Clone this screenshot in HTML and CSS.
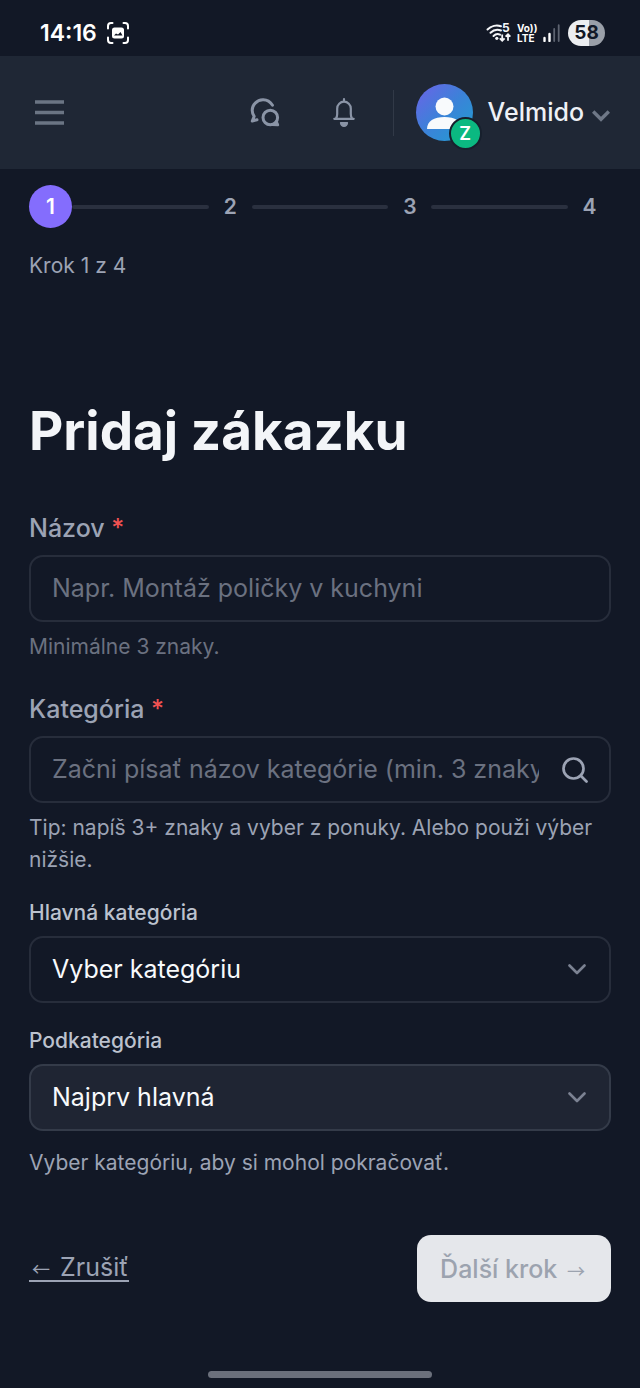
FILE: index.html
```html
<!DOCTYPE html>
<html lang="sk">
<head>
<meta charset="utf-8">
<meta name="viewport" content="width=device-width, initial-scale=1">
<title>Pridaj zákazku</title>
<link rel="stylesheet" href="styles.css">
</head>
<body>
<div class="screen">
  <div class="status">
    <div class="status-group">
      <span class="clock">14:16</span>
      <svg class="capture" viewBox="0 0 22 22" aria-hidden="true">
        <path d="M1 6.500V4a3 3 0 0 1 3-3h1.500M16.500 1H18a3 3 0 0 1 3 3v2.500M21 15.500V18a3 3 0 0 1-3 3h-1.500M5.500 21H4a3 3 0 0 1-3-3v-2.500" fill="none" stroke="#fff" stroke-width="2" stroke-linecap="round"/>
        <rect x="5" y="5.500" width="12" height="11" rx="2.500" fill="#fff"/>
        <path d="M7 13.500l2-2 2 1 2.500-2.500 2 3.500z" fill="#121826"/>
      </svg>
    </div>
    <div class="status-group">
      <svg class="wifi" viewBox="0 -4 25 28" aria-hidden="true">
        <g fill="none" stroke="#f4f5f8" stroke-width="2" stroke-linecap="round">
          <path d="M1.500 6.500C5 2.800 10.500 1.700 15 3.200"/>
          <path d="M4.500 9.800C7.500 6.800 11.500 6.100 15 7.500"/>
          <path d="M7.500 13c2-2 4.500-2.300 6.500-1.300"/>
        </g>
        <circle cx="10.800" cy="15.300" r="1.600" fill="#f4f5f8"/>
        <path d="M16.200 11.500v6M13.800 15.400l2.400 2.400 2.400-2.400M22 17.800v-6M19.600 13.700L22 11.300l2.400 2.400" fill="none" stroke="#f4f5f8" stroke-width="1.800"/>
        <text x="16" y="9" class="wifi-gen">5</text>
      </svg>
      <span class="volte"><span>Vo))</span><span>LTE</span></span>
      <svg class="signal" viewBox="0 0 17 18" aria-hidden="true">
        <path d="M1.500 14v3M6.500 10v7" stroke="#fff" stroke-width="2.400" stroke-linecap="round"/>
        <path d="M11.200 5v12M15.700 1.200V17" stroke="#5d6370" stroke-width="1.800" stroke-linecap="round"/>
      </svg>
      <span class="battery">58</span>
    </div>
  </div>

  <header class="topbar">
    <button class="icon-button" type="button" aria-label="Menu">
      <svg class="menu-icon" viewBox="0 0 29 26"><path d="M0 2h29M0 12.500h29M0 23h29" stroke="#6b7584" stroke-width="3.600"/></svg>
    </button>
    <div class="actions">
      <button class="icon-button" type="button" aria-label="Správy">
        <svg class="chat-icon" viewBox="0 0 30 30" fill="none" stroke="#8a94a6" stroke-width="3" stroke-linejoin="round" stroke-linecap="round">
          <path d="M22.500 7.200C20 3.400 16.500 1.600 12.800 1.800 6.800 2.200 2.200 6.700 2.200 12.300c0 2.400.8 4.300 2 6L2.300 23l4.700-1.200"/>
          <circle cx="20.300" cy="19.500" r="7.300"/>
          <path d="M26.200 23.500l1.500 3.300-5.500-.2"/>
        </svg>
      </button>
      <button class="icon-button" type="button" aria-label="Upozornenia">
        <svg class="bell-icon" viewBox="0 0 22 29" fill="none" stroke="#8a94a6" stroke-width="2.200" stroke-linecap="round" stroke-linejoin="round">
          <path d="M11 1.200v2M1.300 20.800h19.400M2.900 20.500c1-1.200 1.300-2.500 1.300-4.500v-5.500a6.800 6.800 0 0 1 13.600 0V16c0 2 .3 3.300 1.300 4.500"/>
          <path d="M7.600 24.800h6.800a3.400 3.400 0 0 1-6.800 0z" fill="#8a94a6" stroke-width="1.500"/>
        </svg>
      </button>
      <button class="profile" type="button">
        <span class="avatar">
          <svg class="person" viewBox="0 0 57 57" aria-hidden="true"><circle cx="28.500" cy="22.500" r="9" fill="#f8fafc"/><path d="M11 45c0-8 7-12 17.500-12S46 37 46 45z" fill="#f8fafc"/></svg>
          <span class="badge">Z</span>
        </span>
        <span class="name">Velmido</span>
        <svg class="caret" viewBox="0 0 18 13" aria-hidden="true"><path d="M1.200 2.500L9 10.300 16.800 2.500" fill="none" stroke="#6f7887" stroke-width="3.400"/></svg>
      </button>
    </div>
  </header>

  <main class="content">
    <ol class="steps">
      <li class="step step-current" aria-current="step">1</li>
      <li class="bar" role="presentation"></li>
      <li class="step">2</li>
      <li class="bar" role="presentation"></li>
      <li class="step">3</li>
      <li class="bar" role="presentation"></li>
      <li class="step">4</li>
    </ol>
    <p class="progress">Krok 1 z 4</p>

    <h1 class="title">Pridaj zákazku</h1>

    <form class="form">
      <div class="field">
        <label class="label" for="name">Názov <span class="required">*</span></label>
        <input class="control" id="name" type="text" placeholder="Napr. Montáž poličky v kuchyni">
        <p class="hint hint-dim">Minimálne 3 znaky.</p>
      </div>

      <div class="field">
        <label class="label" for="category">Kategória <span class="required">*</span></label>
        <div class="control-wrap">
          <input class="control control-search" id="category" type="text" placeholder="Začni písať názov kategórie (min. 3 znaky)">
          <svg class="search-icon" viewBox="0 0 26 26" aria-hidden="true"><circle cx="11.500" cy="11.500" r="10" fill="none" stroke="#9ca3b4" stroke-width="2.700"/><path d="M18.800 18.800l5.700 5.700" stroke="#9ca3b4" stroke-width="2.700" stroke-linecap="round"/></svg>
        </div>
        <p class="hint">Tip: napíš 3+ znaky a vyber z ponuky. Alebo použi výber nižšie.</p>
      </div>

      <div class="picker">
        <label class="label-small" for="main-category">Hlavná kategória</label>
        <div class="control-wrap">
          <select class="control" id="main-category"><option>Vyber kategóriu</option></select>
          <svg class="chevron" viewBox="0 0 18 11" aria-hidden="true"><path d="M1.500 1.500L9 9l7.500-7.500" fill="none" stroke="#7b8292" stroke-width="2.600" stroke-linecap="round" stroke-linejoin="round"/></svg>
        </div>
      </div>

      <div class="picker">
        <label class="label-small" for="subcategory">Podkategória</label>
        <div class="control-wrap">
          <select class="control" id="subcategory" disabled><option>Najprv hlavná</option></select>
          <svg class="chevron" viewBox="0 0 18 11" aria-hidden="true"><path d="M1.500 1.500L9 9l7.500-7.500" fill="none" stroke="#7b8292" stroke-width="2.600" stroke-linecap="round" stroke-linejoin="round"/></svg>
        </div>
      </div>
      <p class="notice">Vyber kategóriu, aby si mohol pokračovať.</p>

      <div class="footer">
        <a class="cancel" href="#"><span class="arrow">←</span> Zrušiť</a>
        <button class="next" type="submit" disabled>Ďalší krok <span class="arrow">→</span></button>
      </div>
    </form>
  </main>
  <div class="home-bar"></div>
</div>
</body>
</html>
```

FILE: styles.css
```css
* {
  box-sizing: border-box;
}

body {
  margin: 0;
  background: #121826;
  color: #9ca3b4;
  font-family: Inter, "Noto Sans", sans-serif;
  font-size: 25px;
  line-height: 32px;
}

button,
input,
select {
  font: inherit;
  color: inherit;
}

p,
h1,
ol {
  margin: 0;
  padding: 0;
}

svg {
  display: block;
  flex: none;
}

.screen {
  display: flex;
  flex-direction: column;
  min-height: 100vh;
}

/* Status bar */
.status {
  display: flex;
  align-items: center;
  justify-content: space-between;
  height: 56px;
  padding: 10px 35px 0 40px;
  color: #fff;
}

.status-group {
  display: flex;
  align-items: center;
  gap: 6px;
}

.clock {
  font-size: 23px;
  font-weight: 600;
  margin-right: 4px;
}

.capture {
  width: 22px;
  height: 22px;
}

.wifi {
  width: 25px;
  height: 28px;
}

.wifi-gen {
  fill: #f4f5f8;
  font-size: 12px;
  font-weight: 700;
}

.volte {
  display: flex;
  flex-direction: column;
  width: 20px;
  font-size: 10px;
  font-weight: 700;
  line-height: 10px;
}

.signal {
  width: 17px;
  height: 18px;
}

.battery {
  width: 37px;
  height: 26px;
  margin-left: 2px;
  border-radius: 13px;
  background: linear-gradient(90deg, #eceef1 58%, #9a9fa8 58%);
  color: #121826;
  font-size: 19px;
  font-weight: 700;
  line-height: 26px;
  text-align: center;
}

/* Header */
.topbar {
  display: flex;
  align-items: center;
  justify-content: space-between;
  height: 113px;
  padding: 0 30px 0 35px;
  background: #1f2735;
}

.icon-button,
.profile {
  padding: 0;
  border: 0;
  background: none;
}

.menu-icon {
  width: 29px;
  height: 26px;
}

.actions {
  display: flex;
  align-items: center;
}

.chat-icon {
  width: 30px;
  height: 30px;
  margin-right: 53px;
}

.bell-icon {
  width: 22px;
  height: 29px;
  margin-right: 38px;
}

.profile {
  display: flex;
  align-items: center;
  padding-left: 23px;
  background: linear-gradient(#313947, #313947) left center / 1px 46px no-repeat;
}

.avatar {
  position: relative;
  width: 57px;
  height: 57px;
  border-radius: 50%;
  background: linear-gradient(135deg, #6d62e8, #3b82d8 50%, #1f9fd0);
}

.person {
  width: 57px;
  height: 57px;
}

.badge {
  position: absolute;
  right: -9px;
  bottom: -9px;
  width: 33px;
  height: 33px;
  border: 2px solid #17202d;
  border-radius: 50%;
  background: #0bb981;
  color: #fff;
  font-size: 18px;
  font-weight: 600;
  line-height: 29px;
  text-align: center;
}

.name {
  margin: 0 8px 2px 15px;
  color: #eef1f6;
  font-weight: 500;
}

.caret {
  width: 18px;
  height: 13px;
  margin-top: 6px;
}

/* Wizard progress */
.content {
  flex: 1;
  padding: 16px 29px 0;
}

.steps {
  display: flex;
  align-items: center;
  list-style: none;
}

.step {
  width: 43px;
  height: 43px;
  border-radius: 50%;
  font-size: 21px;
  font-weight: 600;
  line-height: 43px;
  text-align: center;
}

.step-current {
  background: #846dfd;
  color: #fff;
}

.bar {
  flex: 1;
  height: 4px;
  border-radius: 2px;
  background: #2a303f;
}

.progress {
  margin-top: 22px;
  font-size: 21px;
}

.title {
  margin-top: 117px;
  color: #f3f5f8;
  font-size: 53px;
  font-weight: 700;
  line-height: 64px;
}

/* Form */
.form {
  margin-top: 49px;
}

.field {
  margin-bottom: 30px;
}

.field + .picker {
  margin-top: -9px;
}

.picker {
  margin-bottom: 22px;
}

.label {
  display: block;
  margin-bottom: 11px;
  font-weight: 500;
}

.required {
  color: #f05252;
}

.label-small {
  display: block;
  margin-bottom: 7px;
  color: #bcc2ce;
  font-size: 21px;
  font-weight: 500;
}

.control-wrap {
  position: relative;
}

.control {
  display: block;
  width: 100%;
  height: 67px;
  padding: 0 21px 1px;
  border: 2px solid #272d3b;
  border-radius: 14px;
  background: transparent;
  color: #f8fafc;
  appearance: none;
}

.control::placeholder {
  color: #6b7180;
  opacity: 1;
}

.control:disabled {
  border-color: #343b49;
  background: #1f2533;
  color: #f8fafc;
  opacity: 1;
}

.control-search {
  padding-right: 70px;
}

.search-icon {
  position: absolute;
  top: 21px;
  right: 23px;
  width: 26px;
  height: 26px;
}

.chevron {
  position: absolute;
  top: 28px;
  right: 25px;
  width: 18px;
  height: 11px;
  pointer-events: none;
}

.hint {
  margin-top: 9px;
  font-size: 21px;
}

.hint-dim {
  color: #6b7180;
}

.notice {
  margin-top: -6px;
  font-size: 21px;
}

.footer {
  display: flex;
  align-items: center;
  justify-content: space-between;
  margin-top: 56px;
}

.cancel {
  border-bottom: 2px solid #9ca3b4;
  color: #9ca3b4;
  line-height: 25px;
  text-decoration: none;
}

.arrow {
  padding: 0 3px;
  font-family: "Noto Sans CJK JP", sans-serif;
  font-size: 18px;
  font-weight: 400;
  line-height: 18px;
}

.next {
  height: 67px;
  padding: 0 23px;
  border: 0;
  border-radius: 14px;
  background: #e5e7eb;
  color: #9ca3af;
  font-weight: 500;
}

.home-bar {
  width: 35%;
  height: 7px;
  margin: 24px auto 10px;
  border-radius: 4px;
  background: #6b707c;
}
```
